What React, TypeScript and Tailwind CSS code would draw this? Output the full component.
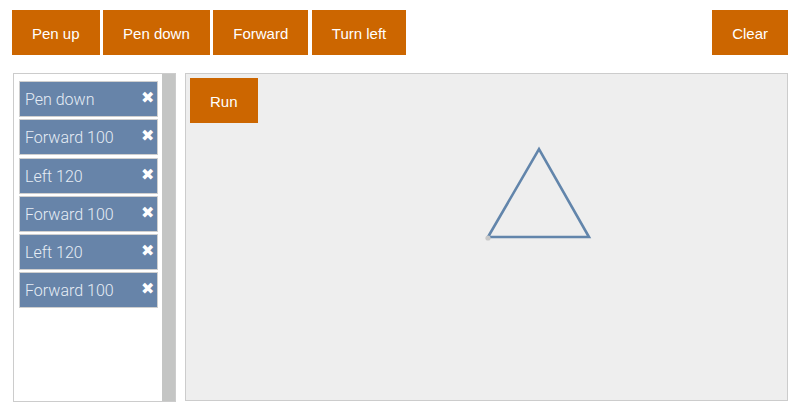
const commands = ['Pen down', 'Forward 100', 'Left 120', 'Forward 100', 'Left 120', 'Forward 100'];

function ActionButton({ label }: { label: string }) {
  return (
    <button className="h-[45px] px-5 pt-[4px] bg-[#cc6600] text-white text-[15px] font-['Liberation_Sans',Arial,sans-serif]">
      {label}
    </button>
  );
}

export default function App() {
  return (
    <div className="w-[809px] h-[411px] bg-white font-['Liberation_Sans',Arial,sans-serif]">
      <div className="flex flex-row gap-[3.5px] pt-[10px] pl-3 pr-[21px]">
        <ActionButton label="Pen up" />
        <ActionButton label="Pen down" />
        <ActionButton label="Forward" />
        <ActionButton label="Turn left" />
        <div className="flex-1" />
        <ActionButton label="Clear" />
      </div>

      <div className="flex flex-row mt-[18px] ml-[13px]">
        <div className="w-[163px] h-[329px] border border-[#cccccc] flex flex-row">
          <div className="w-[148px] flex flex-col gap-[2.3px] pt-[7px] pl-[5px] pr-[4px]">
            {commands.map((cmd, i) => (
              <div
                key={i}
                className="relative h-[36px] border border-[#cfcfcf] bg-[#6784a9] flex items-center pl-[5px] pt-[2px] font-['Roboto',sans-serif] font-light text-[16px] text-[#e6edf5]">
                {cmd}
                <span className="absolute right-[3px] top-[8px] text-white text-[16px] leading-none font-['DejaVu_Sans',sans-serif]">
                  ✖
                </span>
              </div>
            ))}
          </div>
          <div className="w-[13px] h-full bg-[#c4c5c4]" />
        </div>

        <div className="relative ml-[9px] w-[603px] h-[328px] border border-[#cccccc] bg-[#eeeeee]">
          <svg className="absolute inset-0" width="601" height="326" viewBox="0 0 601 326">
            <polygon
              points="302,163 353,75 403,163"
              fill="none"
              stroke="#6285ab"
              strokeWidth="2.6"
              strokeLinejoin="miter"
            />
            <circle cx="302" cy="164" r="2.6" fill="#c8c8c8" />
          </svg>
          <div className="relative pt-1 pl-1">
            <ActionButton label="Run" />
          </div>
        </div>
      </div>
    </div>
  );
}
